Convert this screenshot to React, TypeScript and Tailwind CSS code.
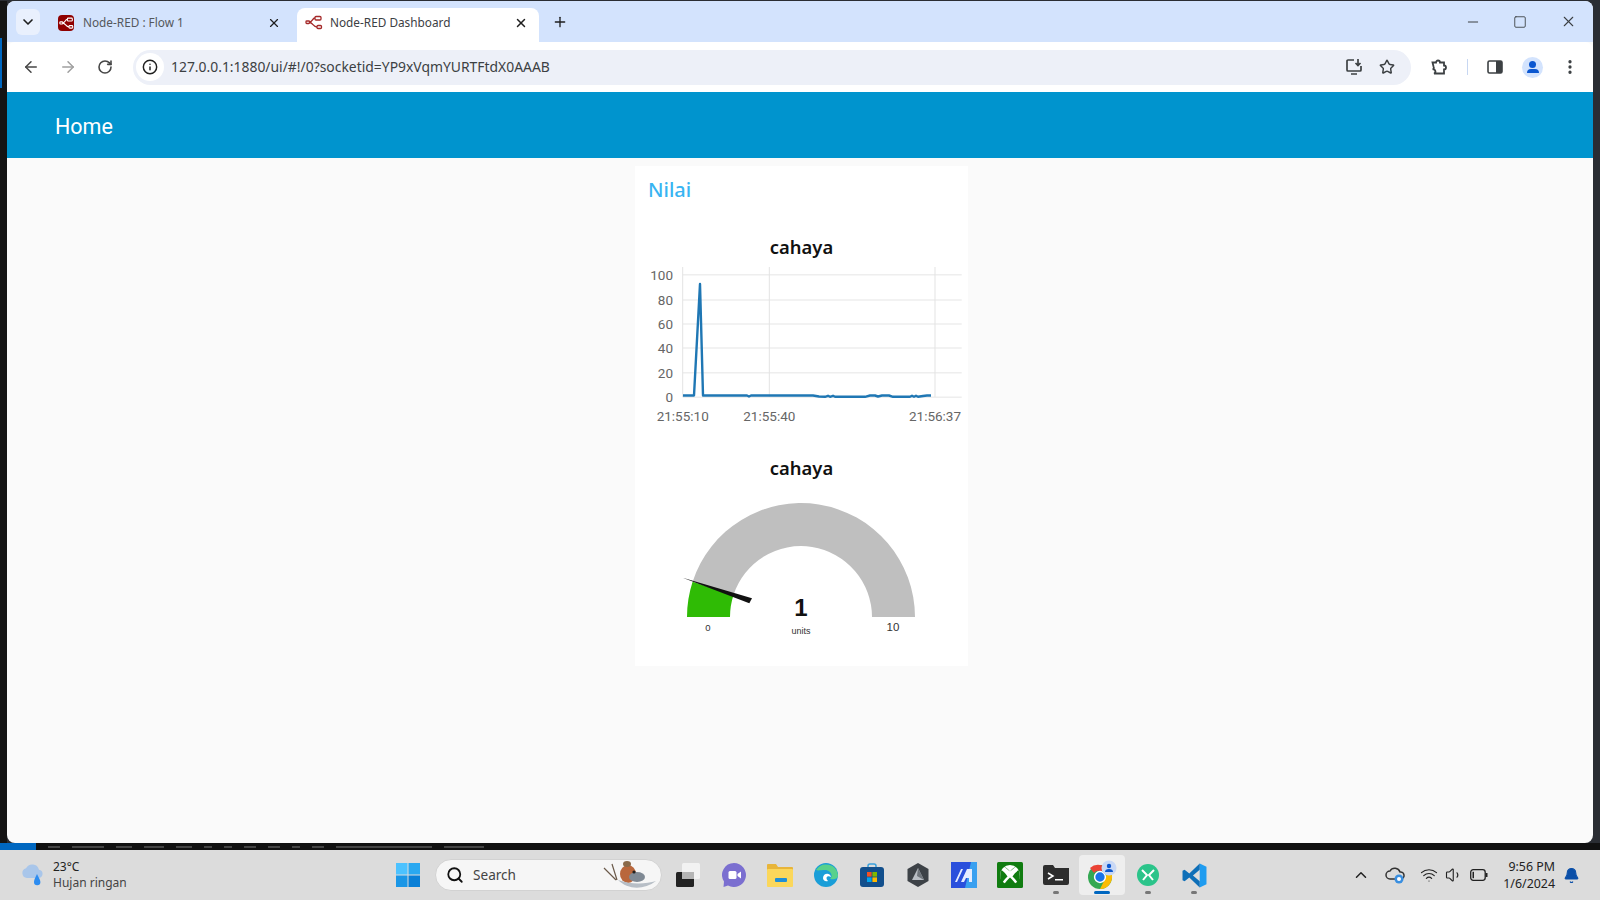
import React from 'react';
import {
    ArrowLeft, ArrowRight, Bell, ChevronDown, ChevronUp, EllipsisVertical, Info, Minus, Plus,
    RotateCw, Search, Square, Star, Volume1, Wifi, X,
} from 'lucide-react';

const yTicks = [
    { label: '100', y: 13.7 },
    { label: '80', y: 39 },
    { label: '60', y: 63 },
    { label: '40', y: 87 },
    { label: '20', y: 111.7 },
    { label: '0', y: 136.3 },
];

const xTicks = [
    { label: '21:55:10', x: 47.7 },
    { label: '21:55:40', x: 134.3 },
    { label: '21:56:37', x: 300 },
];

const linePoints =
    '48,134.5 59,134.5 65,23 68,134.5 112,134.5 114,135.5 116,134.5 178,134.5 184,135.5 190,135.8 193,134.8 195,135.8 198,134.8 200,135.8 230,135.8 235,134.5 240,134.5 243,135.5 247,134.5 254,134.5 258,135.8 275,135.8 277,134.8 279,135.8 281,134.8 283,135.8 288,135 292,134.5 296,134.5';

const LineChart = () => (
    <svg width="333" height="170" className="block font-['Roboto',sans-serif]">
        {yTicks.map(t => (
            <g key={t.label}>
                <line x1="47.7" x2="326.7" y1={t.y} y2={t.y} stroke="#eeeeee" strokeWidth="1.5" />
                <text x="38" y={t.y + 5} textAnchor="end" fontSize="13.5" fill="#666666">{t.label}</text>
            </g>
        ))}
        {xTicks.map(t => (
            <g key={t.label}>
                <line x1={t.x} x2={t.x} y1="6" y2="136" stroke="#e3e3e3" />
                <text x={t.x} y="160" textAnchor="middle" fontSize="13.5" fill="#666666">{t.label}</text>
            </g>
        ))}
        <polyline points={linePoints} fill="none" stroke="#1f77b4" strokeWidth="2.4" strokeLinejoin="round" />
    </svg>
);

const Gauge = () => (
    <svg width="333" height="177" className="block font-['Liberation_Sans',sans-serif]">
        <path d="M57.6 98.8 A114 114 0 0 1 280 134 L237 134 A71 71 0 0 0 98.5 112.1 Z" fill="#bfbfbf" />
        <path d="M52 134 A114 114 0 0 1 57.6 98.8 L98.5 112.1 A71 71 0 0 0 95 134 Z" fill="#2fbb05" />
        <polygon points="47.7,94.7 117,115.3 114.3,120.3" fill="#111111" />
        <text x="166" y="133" textAnchor="middle" fontSize="24" fontWeight="700" fill="#111111">1</text>
        <text x="166" y="151" textAnchor="middle" fontSize="9" fill="#333333">units</text>
        <text x="73" y="148" textAnchor="middle" fontSize="9.5" fill="#333333">0</text>
        <text x="258" y="148" textAnchor="middle" fontSize="11.5" fill="#333333">10</text>
    </svg>
);

const FlowIcon = ({ className, color }: { className?: string; color: string }) => (
    <svg viewBox="0 0 18 18" className={className} fill="none" stroke={color} strokeWidth="1.3">
        <rect x="10" y="2.5" width="6" height="3.5" rx="1" />
        <rect x="1" y="7" width="3.5" height="2.5" rx="0.8" />
        <rect x="12" y="11.5" width="4.5" height="3" rx="1" />
        <path d="M4.5 8 C8 8 7 4 10 4 M4.5 8.5 C8 8.5 8 13 12 13" />
    </svg>
);

const WindowsLogo = () => (
    <svg viewBox="0 0 24 24" className="w-6 h-6">
        <rect x="0" y="0" width="11.5" height="11.5" fill="#4cc2ff" />
        <rect x="12.5" y="0" width="11.5" height="11.5" fill="#2aa8f0" />
        <rect x="0" y="12.5" width="11.5" height="11.5" fill="#1a96e6" />
        <rect x="12.5" y="12.5" width="11.5" height="11.5" fill="#0a7fd6" />
    </svg>
);

const Bird = () => (
    <svg viewBox="0 0 56 30" className="w-14 h-[30px]">
        <path d="M2 8 L14 20 M10 4 L15 20" stroke="#6b5a4a" strokeWidth="1.2" fill="none" />
        <ellipse cx="26" cy="14" rx="8" ry="9" fill="#b9673c" />
        <ellipse cx="25" cy="4" rx="4" ry="3" fill="#8a6a4a" />
        <ellipse cx="35" cy="17" rx="8" ry="5" fill="#7f8994" />
        <circle cx="32" cy="12" r="1.6" fill="#222" />
        <path d="M16 20 C26 30 42 30 54 21 C44 24 30 25 16 20 Z" fill="#b7bec6" />
    </svg>
);

const TaskIcon = ({ dot, children }: { dot?: 'gray' | 'blue'; children: React.ReactNode }) => (
    <div className={`relative w-[46px] h-10 flex items-center justify-center rounded ${dot === 'blue' ? 'bg-[#eeeeee]' : ''}`}>
        {children}
        {dot === 'gray' && <span className="absolute bottom-[1px] left-[20px] w-[6px] h-[3px] rounded bg-[#777777]" />}
        {dot === 'blue' && <span className="absolute bottom-[1px] left-[15px] w-4 h-[3px] rounded bg-[#0067c0]" />}
    </div>
);

const stripMarks = ['w-3', 'w-8', 'w-4', 'w-5', 'w-4', 'w-2', 'w-2', 'w-3', 'w-3', 'w-2', 'w-3', 'w-24', 'w-10'];

export default function App() {
    return (
        <div className="w-[1600px] h-[900px] flex flex-col overflow-hidden bg-[#141414] font-['Noto_Sans',sans-serif]">
            <div className="h-[843px] flex pt-px bg-[#2a2d33]">
                {/* left gutter */}
                <div className="w-[7px] bg-[#141414] pt-[37px]">
                    <div className="w-[2px] h-[50px] bg-[#0067c0]" />
                </div>

                {/* browser window */}
                <div className="w-[1586px] flex flex-col rounded-t-lg rounded-b-lg overflow-hidden bg-[#fafafa]">
                    <div className="h-[41px] flex bg-[#d3e3fd] text-[#3c4043] text-[11.8px] items-end">
                        <div className="w-[24px] h-[26px] ml-[9px] mb-[7px] rounded-md bg-[#e9f0fd] flex items-center justify-center">
                            <ChevronDown className="w-4 h-4 text-[#1f1f1f]" strokeWidth={2.5} />
                        </div>
                        <div className="w-[257px] h-[34px] flex items-center pl-[18px] pr-[16px] pb-1">
                            <div className="w-4 h-4 rounded-sm bg-[#8f0000] flex items-center justify-center">
                                <FlowIcon className="w-[15px] h-[15px]" color="#ffffff" />
                            </div>
                            <span className="ml-[9px] flex-1 text-[#54585c]">Node-RED : Flow 1</span>
                            <X className="w-[14px] h-[14px] text-[#1f1f1f]" strokeWidth={2} />
                        </div>
                        <div className="w-[242px] h-[34px] flex items-center pl-2 pr-[11px] pb-1 bg-white rounded-t-lg">
                            <FlowIcon className="w-[18px] h-[18px]" color="#a52a2a" />
                            <span className="ml-[7px] flex-1">Node-RED Dashboard</span>
                            <X className="w-[14px] h-[14px] text-[#1f1f1f]" strokeWidth={2.5} />
                        </div>
                        <div className="ml-[13px] h-[34px] pb-[7px] flex items-center">
                            <Plus className="w-4 h-4 text-[#1f1f1f]" />
                        </div>
                        <div className="ml-auto h-full flex items-center pr-[16px] gap-[31px] text-[#3c4043]">
                            <Minus className="w-4 h-4 mr-[-1px]" strokeWidth={1.5} />
                            <Square className="w-[14px] h-[14px] mx-[2px]" strokeWidth={1.5} />
                            <X className="w-[17px] h-[17px]" strokeWidth={1.5} />
                        </div>
                    </div>

                    <div className="h-[50px] flex items-center bg-white rounded-t-lg text-[#474747]">
                        <ArrowLeft className="w-[18px] h-[18px] ml-[15px]" strokeWidth={2} />
                        <ArrowRight className="w-[18px] h-[18px] ml-[19px] text-[#a0a0a0]" strokeWidth={2} />
                        <RotateCw className="w-4 h-4 ml-[20px]" strokeWidth={2.4} />
                        <div className="ml-[20px] w-[1278px] h-[35px] flex items-center rounded-full bg-[#edf0f8]">
                            <div className="ml-[3px] w-[28px] h-[28px] rounded-full bg-white flex items-center justify-center">
                                <Info className="w-4 h-4 text-[#1f1f1f]" strokeWidth={2.2} />
                            </div>
                            <span className="ml-[7px] flex-1 text-[13.9px] text-[#3c4043]">127.0.0.1:1880/ui/#!/0?socketid=YP9xVqmYURTFtdX0AAAB</span>
                            <svg viewBox="0 0 18 18" className="w-[18px] h-[18px] mr-[16px]" fill="none" stroke="#3c4043" strokeWidth="1.7">
                                <path d="M9 2 H3 a1 1 0 0 0 -1 1 V12 a1 1 0 0 0 1 1 H15 a1 1 0 0 0 1 -1 V8" />
                                <path d="M6 16 H12 M13 1 V7 M10.5 5 L13 7.5 L15.5 5" />
                            </svg>
                            <Star className="w-4 h-4 mr-[16px] text-[#3c4043]" strokeWidth={2.2} />
                        </div>
                        <svg viewBox="0 0 18 18" className="w-[18px] h-[18px] ml-[19px]" fill="none" stroke="#3c4043" strokeWidth="1.8">
                            <path d="M2.5 4.5 H6 a2 2 0 0 1 4 0 H14 V7.5 a2 2 0 0 1 0 4 V15.5 H4 a2 2 0 0 0 -1.5 -4 a2 2 0 0 0 1 -3 Z" />
                        </svg>
                        <div className="ml-[19px] w-px h-[16px] bg-[#c7d7f2]" />
                        <svg viewBox="0 0 16 14" className="w-4 h-[14px] ml-[19px]">
                            <rect x="1" y="1" width="14" height="12" rx="1.5" fill="none" stroke="#3c4043" strokeWidth="1.6" />
                            <rect x="9" y="1" width="6" height="12" fill="#3c4043" />
                        </svg>
                        <div className="ml-[19px] w-[21px] h-[21px] rounded-full bg-[#d3e3fd] flex flex-col items-center justify-center">
                            <span className="w-[7px] h-[7px] rounded-full bg-[#0b57d0]" />
                            <span className="w-3 h-1 mt-[1px] rounded-t bg-[#0b57d0]" />
                        </div>
                        <EllipsisVertical className="w-[18px] h-[18px] ml-[18px] text-[#3c4043]" strokeWidth={2.4} />
                    </div>

                    <div className="h-[66px] flex items-center pl-[48px] pt-[5px] bg-[#0094ce] text-white text-[21.5px] font-['Roboto',sans-serif]">Home</div>

                    <main className="flex-1">
                        <div className="w-[333px] h-[500px] ml-[628px] mt-[8px] bg-white">
                            <div className="h-[46px] flex items-center pl-[13px] pt-[2px] text-[20px] font-medium text-[#38b4f2]">Nilai</div>
                            <div className="mt-[19px] h-[30px] pt-[2px] flex items-center justify-center text-[18.4px] font-semibold text-[#111111]">cahaya</div>
                            <LineChart />
                            <div className="mt-[21px] h-[30px] pt-[2px] flex items-center justify-center text-[18.4px] font-semibold text-[#111111]">cahaya</div>
                            <div className="pt-px"><Gauge /></div>
                        </div>
                    </main>
                </div>
            </div>

            {/* strip of the window behind */}
            <div className="h-[7px] flex items-center bg-[#111111]">
                <div className="w-9 h-full bg-[#0067c0]" />
                <div className="flex items-center gap-[12px] ml-[12px]">
                    {stripMarks.map((w, i) => (
                        <span key={i} className={`${w} h-[2px] bg-[#444444]`} />
                    ))}
                </div>
            </div>

            {/* taskbar */}
            <div className="h-[50px] flex items-center bg-[#dcdcdc]">
                <div className="w-[385px] flex items-center pl-5">
                    <svg viewBox="0 0 26 24" className="w-[26px] h-6">
                        <path d="M7 15 a5 5 0 0 1 -1 -9.8 a7 7 0 0 1 13 1.5 a4.2 4.2 0 0 1 0 8.3 Z" fill="#a9c6ea" />
                        <path d="M17 11 C15 15 14 17 14 19 a3.2 3.2 0 0 0 6.4 0 C20.4 17 19 15 17 11 Z" fill="#2d8cf0" />
                    </svg>
                    <div className="ml-[7px] text-[12px] leading-[16px] text-[#222222]">
                        <div>23°C</div>
                        <div className="text-[#444444]">Hujan ringan</div>
                    </div>
                </div>
                <div className="w-[46px] flex justify-center"><WindowsLogo /></div>
                <div className="ml-1 w-[227px] h-8 flex items-center pl-[10px] pr-[3px] rounded-full bg-[#f6f6f6] border border-[#d2d2d2]">
                    <Search className="w-[18px] h-[18px] text-[#111111]" strokeWidth={2.4} />
                    <span className="ml-[9px] flex-1 text-[13.6px] text-[#444444]">Search</span>
                    <Bird />
                </div>
                <div className="ml-[3px] flex items-center">
                    <TaskIcon>
                        <svg viewBox="0 0 24 24" className="w-6 h-6">
                            <rect x="6" y="0" width="18" height="16" rx="1.5" fill="#f2f2f2" />
                            <rect x="0" y="9" width="18" height="15" rx="1.5" fill="#222222" />
                            <rect x="6" y="9" width="12" height="7" fill="#b5b5b5" />
                        </svg>
                    </TaskIcon>
                    <TaskIcon>
                        <svg viewBox="0 0 24 24" className="w-6 h-6">
                            <path d="M12 0 a12 12 0 1 1 -6 22.4 L1.5 24 L2 18.5 A12 12 0 0 1 12 0 Z" fill="#7b6fd0" />
                            <rect x="6.5" y="8" width="8" height="8" rx="1.5" fill="#ffffff" />
                            <path d="M15.5 11 L19 8.5 V15.5 L15.5 13 Z" fill="#ffffff" />
                        </svg>
                    </TaskIcon>
                    <TaskIcon>
                        <svg viewBox="0 0 26 24" className="w-[26px] h-6">
                            <path d="M0 2 a1 1 0 0 1 1 -1 H9 L11 4 H25 a1 1 0 0 1 1 1 V12 H0 Z" fill="#e8b53a" />
                            <rect x="0" y="6" width="26" height="18" rx="1" fill="#fbd75b" />
                            <rect x="8" y="15" width="12" height="4" rx="1" fill="#1f8fd6" />
                        </svg>
                    </TaskIcon>
                    <TaskIcon>
                        <svg viewBox="0 0 24 24" className="w-6 h-6">
                            <circle cx="12" cy="12" r="12" fill="#1a9ed8" />
                            <path d="M2 7 A12 12 0 0 1 24 12 C24 16 20 17 16 16 C20 12 16 7 11 7 C7 7 4 8 2 7 Z" fill="#58d18c" />
                            <path d="M9 15 C9 10 16 9 17 14 C13 12 11 15 14 18 C11 19 9 17 9 15 Z" fill="#ffffff" />
                        </svg>
                    </TaskIcon>
                    <TaskIcon>
                        <svg viewBox="0 0 24 24" className="w-6 h-6">
                            <path d="M8 5 V3 a2 2 0 0 1 2 -2 H14 a2 2 0 0 1 2 2 V5" fill="none" stroke="#3aa0dc" strokeWidth="1.5" />
                            <rect x="0" y="4" width="24" height="20" rx="3" fill="#124f8c" />
                            <rect x="7" y="9" width="4.6" height="4.6" fill="#f25022" />
                            <rect x="12.4" y="9" width="4.6" height="4.6" fill="#7fba00" />
                            <rect x="7" y="14.4" width="4.6" height="4.6" fill="#00a4ef" />
                            <rect x="12.4" y="14.4" width="4.6" height="4.6" fill="#ffb900" />
                        </svg>
                    </TaskIcon>
                    <TaskIcon>
                        <svg viewBox="0 0 24 24" className="w-6 h-6">
                            <polygon points="12,0 22.5,6 22.5,18 12,24 1.5,18 1.5,6" fill="#3d4247" />
                            <polygon points="12,5 18,17 6,17" fill="#b9bec4" />
                            <polygon points="12,5 18,17 11,13" fill="#6f757b" />
                        </svg>
                    </TaskIcon>
                    <TaskIcon>
                        <svg viewBox="0 0 26 26" className="w-[26px] h-[26px]">
                            <rect width="26" height="26" fill="#2a4fdc" />
                            <polygon points="20,0 26,0 26,26 14,26" fill="#3aa0f0" />
                            <path d="M4 20 L10 7 H12 L6 20 Z M10 20 L16 7 H21 V20 H18 V16 H15 L13 20 Z" fill="#e6ecff" />
                        </svg>
                    </TaskIcon>
                    <TaskIcon>
                        <svg viewBox="0 0 26 26" className="w-[26px] h-[26px]">
                            <rect width="26" height="26" rx="1.5" fill="#107c10" />
                            <circle cx="13" cy="13" r="10" fill="#ffffff" />
                            <path d="M7 4.5 C9.5 5.5 11.5 7.5 13 9.5 C14.5 7.5 16.5 5.5 19 4.5 L13 9.5 Z M4.5 8 C7 10 9 12 10.5 14.5 C8 17 6 19 5 21.5 C3 18 2.5 12 4.5 8 Z M21.5 8 C19 10 17 12 15.5 14.5 C18 17 20 19 21 21.5 C23 18 23.5 12 21.5 8 Z M13 15.5 C10.5 18 8.5 20 7 22.5 C10.5 24 15.5 24 19 22.5 C17.5 20 15.5 18 13 15.5 Z" fill="#107c10" />
                        </svg>
                    </TaskIcon>
                    <TaskIcon dot="gray">
                        <svg viewBox="0 0 26 20" className="w-[26px] h-5">
                            <path d="M0 2 a2 2 0 0 1 2 -2 H10 L12 3 H26 V18 a2 2 0 0 1 -2 2 H2 a2 2 0 0 1 -2 -2 Z" fill="#2d2d2d" />
                            <path d="M5 8 L10 11 L5 14" fill="none" stroke="#ffffff" strokeWidth="1.5" />
                            <rect x="12" y="14" width="8" height="1.5" fill="#ffffff" />
                        </svg>
                    </TaskIcon>
                    <TaskIcon dot="blue">
                        <svg viewBox="0 0 30 30" className="w-[30px] h-[30px]">
                            <circle cx="13" cy="17" r="12" fill="#34a853" />
                            <path d="M13 5 A12 12 0 0 1 23.4 11 H13 A6 6 0 0 0 7 13 L3 8 A12 12 0 0 1 13 5 Z" fill="#ea4335" />
                            <path d="M23.4 11 A12 12 0 0 1 13 29 L19 17 A6 6 0 0 0 17 11 Z" fill="#fbbc04" />
                            <circle cx="13" cy="17" r="5.4" fill="#1a73e8" stroke="#ffffff" strokeWidth="1.5" />
                            <circle cx="22" cy="8" r="7.5" fill="#c9d8f5" />
                            <circle cx="22" cy="6" r="2.2" fill="#0b57d0" />
                            <path d="M18 12 a4 3 0 0 1 8 0 Z" fill="#0b57d0" />
                        </svg>
                    </TaskIcon>
                    <TaskIcon dot="gray">
                        <svg viewBox="0 0 22 22" className="w-[22px] h-[22px]">
                            <circle cx="11" cy="11" r="11" fill="#2bc48a" />
                            <path d="M5 6 L10 11 L6 16 M17 6 L12 11 L16 16" fill="none" stroke="#ffffff" strokeWidth="2" />
                        </svg>
                    </TaskIcon>
                    <TaskIcon dot="gray">
                        <svg viewBox="0 0 24 24" className="w-[25px] h-[25px]">
                            <path d="M17 0.5 L23.5 3.5 V20.5 L17 23.5 Z" fill="#1f9cf0" />
                            <path d="M17 0.5 L7 10 L2.5 6.5 L0.5 7.5 V16.5 L2.5 17.5 L7 14 L17 23.5 V17.5 L10.5 12 L17 6.5 Z" fill="#0e6fb8" />
                        </svg>
                    </TaskIcon>
                </div>

                {/* tray */}
                <ChevronUp className="w-[18px] h-[18px] ml-[135px] text-[#222222]" strokeWidth={2} />
                <svg viewBox="0 0 20 18" className="w-5 h-[18px] ml-[15px]">
                    <path d="M5 13 a4 4 0 0 1 0 -8 a5.5 5.5 0 0 1 10 1 a3.5 3.5 0 0 1 1 7 Z" fill="#dcdcdc" stroke="#333333" strokeWidth="1.5" />
                    <circle cx="14" cy="13" r="4.5" fill="#3a8fe0" />
                    <circle cx="14" cy="13" r="2" fill="#ffffff" />
                </svg>
                <Wifi className="w-[18px] h-[18px] ml-[15px] text-[#222222]" strokeWidth={1.6} />
                <Volume1 className="w-[18px] h-[18px] ml-[7px] text-[#222222]" strokeWidth={1.5} />
                <svg viewBox="0 0 18 12" className="w-[18px] h-3 ml-[7px]" fill="none" stroke="#222222" strokeWidth="1.3">
                    <rect x="0.7" y="0.7" width="14.5" height="10.6" rx="2.5" />
                    <rect x="2.5" y="2.8" width="1.5" height="6.4" fill="#222222" stroke="none" />
                    <path d="M16.5 4 V8" strokeWidth="2" />
                </svg>
                <div className="ml-auto mr-[8px] text-right text-[12.4px] leading-[17px] text-[#222222]">
                    <div>9:56 PM</div>
                    <div>1/6/2024</div>
                </div>
                <Bell className="w-[17px] h-[17px] mr-[20px] text-[#0b4fa8] fill-[#0b4fa8]" strokeWidth={1.5} />
            </div>
        </div>
    );
}
